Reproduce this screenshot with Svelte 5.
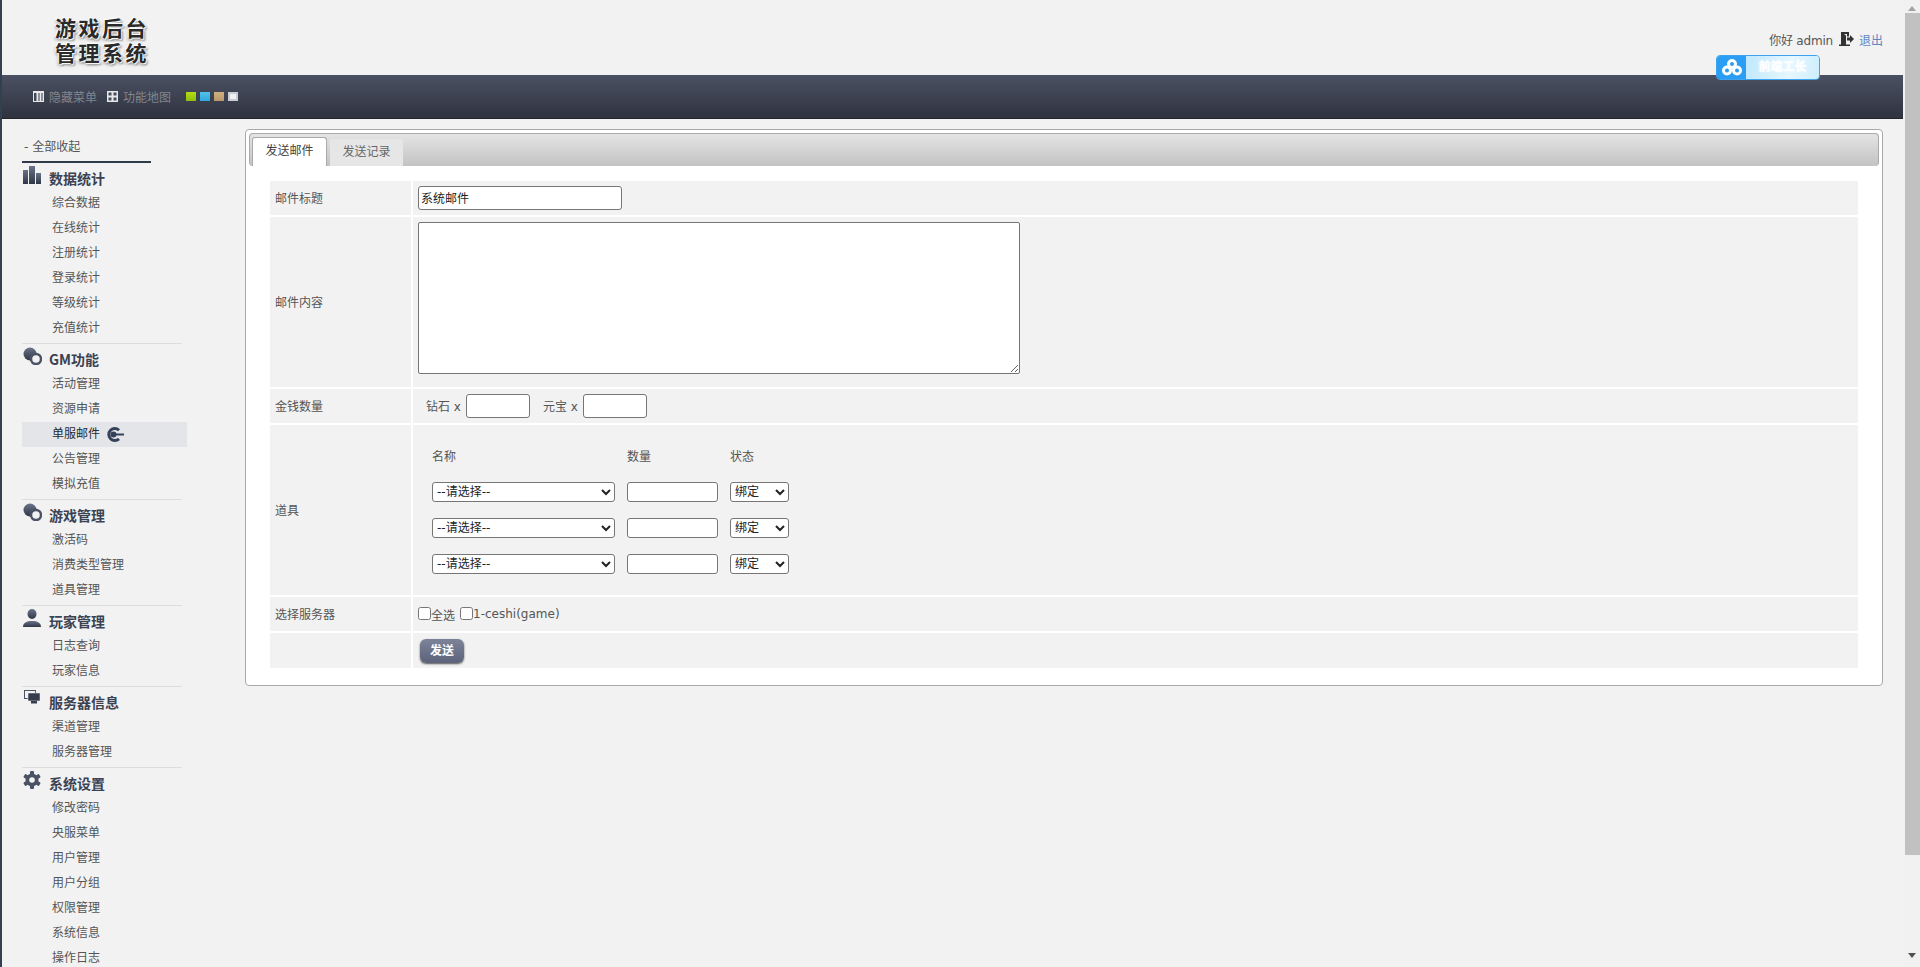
<script>
    const menu = [
        { title: '数据统计', icon: 'bars', items: ['综合数据', '在线统计', '注册统计', '登录统计', '等级统计', '充值统计'] },
        { title: 'GM功能', icon: 'dots', items: ['活动管理', '资源申请', '单服邮件', '公告管理', '模拟充值'] },
        { title: '游戏管理', icon: 'dots', items: ['激活码', '消费类型管理', '道具管理'] },
        { title: '玩家管理', icon: 'user', items: ['日志查询', '玩家信息'] },
        { title: '服务器信息', icon: 'screens', items: ['渠道管理', '服务器管理'] },
        { title: '系统设置', icon: 'gear', items: ['修改密码', '央服菜单', '用户管理', '用户分组', '权限管理', '系统信息', '操作日志'] }
    ];
    const active = '单服邮件';
    const rows = [0, 1, 2];
</script>

<div class="page">
    <div class="main">
        <header class="top">
            <div class="logo">游戏后台<br>管理系统</div>
            <div class="user">
                <span>你好 admin</span>
                <svg class="logout" width="15" height="14" viewBox="0 0 15 14">
                    <path d="M0 14v-1.500h2V0h8v4.500H8V2H5l2 1.500V12.500h3V9.500h0v3h1V14z" fill="#333"/>
                    <path d="M8 5.500h3V3l4 4-4 4V8.500H8z" fill="#333"/>
                </svg>
                <a href="#out">退出</a>
            </div>
            <div class="float-tool">
                <span class="tool-icon">
                    <svg width="20" height="17" viewBox="0 0 20 17" fill="none" stroke="#fff" stroke-width="3">
                        <circle cx="10" cy="5" r="3.500"/>
                        <circle cx="5" cy="11.500" r="3.500"/>
                        <circle cx="15" cy="11.500" r="3.500"/>
                    </svg>
                </span>
                <span class="tool-text">前端工长</span>
            </div>
        </header>

        <nav class="bar">
            <span class="bar-link">
                <svg width="11" height="11" viewBox="0 0 11 11">
                    <rect width="11" height="11" fill="#e8e8e8"/>
                    <rect x="1" y="2" width="2.500" height="8" fill="#444a58"/>
                    <rect x="5" y="2" width="2" height="8" fill="#8d919c"/>
                    <rect x="8" y="2" width="2" height="8" fill="#8d919c"/>
                </svg>
                隐藏菜单
            </span>
            <span class="bar-link">
                <svg width="11" height="11" viewBox="0 0 11 11">
                    <rect width="11" height="11" fill="#e8e8e8"/>
                    <rect x="1.500" y="1.500" width="3" height="3" fill="#444a58"/>
                    <rect x="6.500" y="1.500" width="3" height="3" fill="#444a58"/>
                    <rect x="1.500" y="6.500" width="3" height="3" fill="#444a58"/>
                    <rect x="6.500" y="6.500" width="3" height="3" fill="#444a58"/>
                </svg>
                功能地图
            </span>
            <span class="swatches">
                <i class="green"></i><i class="blue"></i><i class="tan"></i><i class="grey"></i>
            </span>
        </nav>

        <div class="body">
            <aside class="side">
                <div class="collapse">- 全部收起</div>
                {#each menu as group}
                    <section class="group">
                        <h3>
                            <span class="gicon">
                                {#if group.icon === 'bars'}
                                    <svg width="18" height="18" viewBox="0 0 18 18" fill="url(#ig)">
                                        <defs>
                                            <linearGradient id="ig" x1="0" y1="0" x2="0" y2="1">
                                                <stop offset="0" stop-color="#6b7389"/>
                                                <stop offset="1" stop-color="#2f3747"/>
                                            </linearGradient>
                                        </defs>
                                        <rect x="0" y="4" width="5" height="14"/>
                                        <rect x="6" y="0" width="6" height="18"/>
                                        <rect x="13" y="7" width="5" height="11"/>
                                    </svg>
                                {:else if group.icon === 'dots'}
                                    <svg width="19" height="18" viewBox="0 0 19 18">
                                        <circle cx="7" cy="7" r="6.500" fill="url(#ig)"/>
                                        <circle cx="13" cy="12" r="5" fill="#f2f2f2" stroke="#4a5264" stroke-width="2.500"/>
                                    </svg>
                                {:else if group.icon === 'user'}
                                    <svg width="18" height="18" viewBox="0 0 18 18" fill="url(#ig)">
                                        <ellipse cx="9" cy="5" rx="4.500" ry="5"/>
                                        <path d="M0 18c0-4 3-5 6-6h6c3 1 6 2 6 6z"/>
                                    </svg>
                                {:else if group.icon === 'screens'}
                                    <svg width="17" height="14" viewBox="0 0 17 14">
                                        <rect x="0.500" y="0.500" width="11" height="8" fill="#f2f2f2" stroke="#4a5264"/>
                                        <rect x="4" y="3" width="12" height="8" fill="#363e4e" stroke="#f2f2f2" stroke-width="0.500"/>
                                        <rect x="7" y="11" width="6" height="2.500" fill="#363e4e"/>
                                    </svg>
                                {:else}
                                    <svg width="18" height="18" viewBox="0 0 18 18">
                                        <g fill="#4a5264">
                                            <circle cx="9" cy="9" r="6.500"/>
                                            <rect x="7" y="0" width="4" height="18" rx="1"/>
                                            <rect x="7" y="0" width="4" height="18" rx="1" transform="rotate(60 9 9)"/>
                                            <rect x="7" y="0" width="4" height="18" rx="1" transform="rotate(120 9 9)"/>
                                        </g>
                                        <circle cx="9" cy="9" r="2.800" fill="#f2f2f2"/>
                                    </svg>
                                {/if}
                            </span>
                            {group.title}
                        </h3>
                        <ul>
                            {#each group.items as item}
                                <li class:on={item === active}>
                                    {item}
                                    {#if item === active}
                                        <svg class="arrow" width="18" height="15" viewBox="0 0 18 15">
                                            <path d="M13 3.200A6 6 0 1 0 13 11.800" fill="none" stroke="#35415a" stroke-width="3"/>
                                            <circle cx="7.500" cy="7.500" r="3" fill="#35415a"/>
                                            <path d="M7 6.500h11v2H7z" fill="#35415a"/>
                                        </svg>
                                    {/if}
                                </li>
                            {/each}
                        </ul>
                    </section>
                {/each}
            </aside>

            <main class="content">
                <div class="box">
                    <div class="tabs">
                        <span class="tab current">发送邮件</span>
                        <span class="tab">发送记录</span>
                    </div>
                    <div class="form">
                        <div class="lbl">邮件标题</div>
                        <div class="val"><input class="title" type="text" value="系统邮件"></div>

                        <div class="lbl tall">邮件内容</div>
                        <div class="val text"><textarea></textarea></div>

                        <div class="lbl">金钱数量</div>
                        <div class="val money">
                            <span>钻石 x</span><input type="text">
                            <span class="second">元宝 x</span><input type="text">
                        </div>

                        <div class="lbl tall">道具</div>
                        <div class="val props">
                            <div class="prop-grid">
                                <span>名称</span><span>数量</span><span>状态</span>
                                {#each rows as r}
                                    <select><option>--请选择--</option></select>
                                    <input type="text">
                                    <select><option>绑定</option><option>不绑定</option></select>
                                {/each}
                            </div>
                        </div>

                        <div class="lbl">选择服务器</div>
                        <div class="val servers">
                            <label><input type="checkbox">全选</label>
                            <label><input type="checkbox">1-ceshi(game)</label>
                        </div>

                        <div class="lbl"></div>
                        <div class="val"><button type="button">发送</button></div>
                    </div>
                </div>
            </main>
        </div>
    </div>

    <div class="scrollbar">
        <span class="up"></span>
        <span class="thumb"></span>
        <span class="down"></span>
    </div>
</div>

<style>
    :global(html), :global(body) {
        margin: 0;
        overflow: hidden;
    }

    .page {
        display: flex;
        height: 967px;
        overflow: hidden;
        background: #f2f2f2;
        color: #555;
        font: 12px "DejaVu Sans", "Noto Sans CJK SC", sans-serif;
    }

    .main {
        position: relative;
        flex: 1;
        min-width: 0;
        border-left: 2px solid #33404f;
    }

    /* header */
    .top {
        display: flex;
        justify-content: space-between;
        height: 75px;
        box-sizing: border-box;
        padding: 15px 20px 0 53px;
    }

    .logo {
        font: 700 21px/25px "Noto Sans CJK SC", sans-serif;
        letter-spacing: 2.5px;
        color: #2a2a2a;
        text-shadow: 0 0 2px #fff, 1px 1px 1px #fff, -1px -1px 1px #fff, 2px 2px 2px #8a8a8a, -1px 2px 3px #aaa;
    }

    .user {
        display: flex;
        align-items: center;
        gap: 6px;
        height: 18px;
        margin-top: 15px;
    }

    .user span {
        letter-spacing: -0.2px;
    }

    .logout {
        margin-right: -1px;
    }

    .user a {
        color: #5b86c4;
        text-decoration: none;
    }

    .float-tool {
        position: absolute;
        top: 55px;
        left: 1714px;
        display: flex;
        width: 104px;
        height: 25px;
        box-sizing: border-box;
        border: 1px solid #3fa4ef;
        border-radius: 4px;
        overflow: hidden;
        z-index: 2;
    }

    .tool-icon {
        display: flex;
        align-items: center;
        justify-content: center;
        width: 29px;
        background: #2a9df4;
    }

    .tool-text {
        flex: 1;
        text-align: center;
        line-height: 23px;
        font-weight: 700;
        color: #fff;
        text-shadow: 0 0 2px #fff;
        background: linear-gradient(100deg, #bfe8fd, #e6f7ff 60%, #cdeefd);
    }

    .bar {
        display: flex;
        align-items: center;
        height: 44px;
        box-sizing: border-box;
        padding-left: 31px;
        background: linear-gradient(#4b5162, #2f3340);
        border-bottom: 1px solid #22252e;
    }

    .bar-link {
        display: flex;
        align-items: center;
        gap: 5px;
        margin-right: 10px;
        color: #82858e;
    }

    .swatches {
        display: flex;
        gap: 4px;
        margin-left: 5px;
    }

    .swatches i {
        width: 10px;
        height: 9px;
        box-sizing: border-box;
    }

    .green { background: linear-gradient(#b4dc16, #8fc00a); }
    .blue { background: linear-gradient(#52c2ea, #30a8dc); }
    .tan { background: linear-gradient(#cfb080, #b8986a); }
    .grey { background: #f0f0f0; border: 2px solid #c9ccd3; }

    /* sidebar */
    .body {
        display: flex;
    }

    .side {
        flex: none;
        width: 165px;
        margin: 0 58px 0 20px;
    }

    .collapse {
        height: 44px;
        box-sizing: border-box;
        width: 129px;
        padding: 19px 0 0 2px;
        line-height: 18px;
        border-bottom: 2px solid #2f3a4a;
    }

    .group {
        padding: 5px 0 2px;
        border-bottom: 1px solid #ddd;
        width: 160px;
    }

    .group h3 {
        display: flex;
        align-items: flex-start;
        height: 23px;
        margin: 0;
        font: 700 14px/20px "Noto Sans CJK SC", sans-serif;
        color: #3a4254;
    }

    .gicon {
        display: flex;
        justify-content: center;
        flex: none;
        width: 20px;
        height: 18px;
        margin: -2px 7px 0 0;
    }

    .group ul {
        margin: 0;
        padding: 0;
        list-style: none;
    }

    .group li {
        display: flex;
        align-items: center;
        width: 165px;
        height: 25px;
        box-sizing: border-box;
        padding-left: 30px;
        line-height: 25px;
    }

    .group li.on {
        background: #e4e5e8;
        color: #2a2a2a;
    }

    .arrow {
        margin-left: 6px;
    }

    /* content */
    .content {
        flex: 1;
        min-width: 0;
        padding: 10px 20px 0 0;
    }

    .box {
        height: 557px;
        box-sizing: border-box;
        padding: 3px;
        background: #fff;
        border: 1px solid #aaa;
        border-radius: 4px;
    }

    .tabs {
        display: flex;
        align-items: flex-end;
        gap: 3px;
        height: 33px;
        box-sizing: border-box;
        padding-left: 2px;
        border: 1px solid #aaa;
        border-bottom: 0;
        border-radius: 4px;
        background: linear-gradient(#e4e4e4, #c3c3c3);
    }

    .tab {
        width: 73px;
        height: 27px;
        line-height: 27px;
        text-align: center;
        color: #666;
        background: #e6e6e6;
        border-radius: 3px 3px 0 0;
    }

    .tab.current {
        height: 28px;
        color: #444;
        background: #fff;
        border: 1px solid #aaa;
        border-bottom: 0;
        width: 73px;
    }

    .form {
        display: grid;
        grid-template-columns: 141px 1fr;
        grid-template-rows: 34px 170px 34px 170px 34px 35px;
        gap: 2px;
        margin: 15px 21px 0 21px;
    }

    .lbl, .val {
        display: flex;
        align-items: center;
        background: #f2f2f2;
    }

    .lbl {
        padding: 0 0 2px 5px;
    }

    .val {
        padding-left: 5px;
    }

    input[type="text"], textarea, select {
        box-sizing: border-box;
        margin: 0;
        font: 12px "DejaVu Sans", "Noto Sans CJK SC", sans-serif;
        color: #222;
        background: #fff;
        border: 1px solid #767676;
        border-radius: 3px;
    }

    input[type="text"] {
        padding: 0 2px 2px;
    }

    .title {
        width: 204px;
        height: 24px;
    }

    .val.text {
        align-items: flex-start;
        padding-top: 5px;
    }

    textarea {
        display: block;
        width: 602px;
        height: 152px;
        border-radius: 2px;
    }

    .money {
        padding-left: 13px;
    }

    .money span {
        margin: 0 5px 2px 0;
    }

    .money input[type="text"] {
        width: 64px;
        height: 24px;
    }

    .money .second {
        margin: 0 5px 2px 13px;
    }

    .val.props {
        align-items: flex-start;
        padding-left: 19px;
    }

    .prop-grid {
        display: grid;
        grid-template-columns: 183px 91px 59px;
        grid-template-rows: 21px 20px 20px 20px;
        column-gap: 12px;
        row-gap: 16px;
        align-items: start;
        padding-top: 20px;
    }

    .prop-grid span {
        margin-top: 2px;
    }

    .prop-grid select, .prop-grid input[type="text"] {
        width: 100%;
        height: 20px;
    }

    .servers label {
        display: flex;
        align-items: center;
        margin-right: 5px;
    }

    .servers input {
        width: 13px;
        height: 13px;
        margin: 0 0 2px 0;
    }

    button {
        width: 44px;
        height: 24px;
        margin: 0 0 0 2px;
        padding: 0 0 2px;
        border: 0;
        border-radius: 6px;
        font: 700 12px "Noto Sans CJK SC", sans-serif;
        color: #fff;
        background: linear-gradient(#7d8398, #5c627a);
        box-shadow: 0 1px 2px #555;
    }

    /* page scrollbar */
    .scrollbar {
        display: flex;
        flex-direction: column;
        align-items: flex-end;
        flex: none;
        width: 17px;
        background: #f1f1f1;
    }

    .up, .down {
        flex: none;
        width: 0;
        height: 0;
        margin: 6px 4px 0 0;
        border: 4px solid transparent;
    }

    .up {
        border-top: 0;
        border-bottom: 5px solid #a3a3a3;
    }

    .thumb {
        flex: none;
        width: 15px;
        height: 842px;
        margin-top: 2px;
        background: #c1c1c1;
    }

    .down {
        margin-top: 98px;
        border-bottom: 0;
        border-top: 5px solid #505050;
    }
</style>
